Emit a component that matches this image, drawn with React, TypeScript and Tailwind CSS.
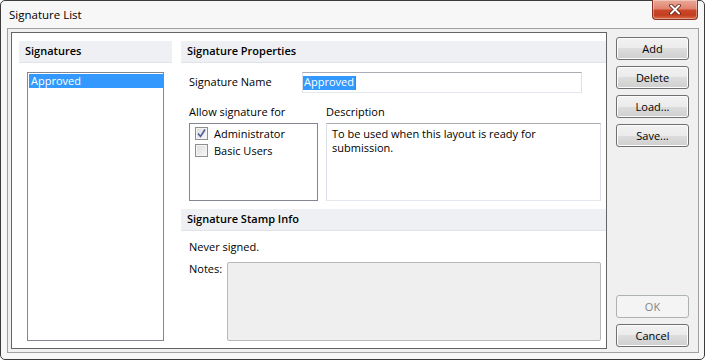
import React from "react";

const btnBase =
  "flex h-[23px] w-[73px] items-center justify-center rounded-[3px] border text-[11px] leading-none";

function Btn({ label, disabled }: { label: string; disabled?: boolean }) {
  return (
    <button
      disabled={disabled}
      className={
        disabled
          ? `${btnBase} border-[#adb2b5] bg-[#f4f4f4] text-[#838383]`
          : `${btnBase} border-[#707070] bg-[linear-gradient(#f2f2f2_0%,#ebebeb_50%,#dddddd_50%,#cfcfcf_100%)] text-black shadow-[inset_0_0_0_1px_#fcfcfc]`
      }
    >
      {label}
    </button>
  );
}

function Check({ checked, label }: { checked?: boolean; label: string }) {
  return (
    <div className="flex h-[17px] items-start">
      <div className="flex h-[13px] w-[13px] items-center justify-center border border-[#8e8f8f] bg-[linear-gradient(135deg,#dcdcdc,#f8f8f8)] shadow-[inset_0_0_0_1px_#f4f4f4]">
        {checked && (
          <svg width="9" height="9" viewBox="0 0 9 9">
            <path d="M1 4.5 L3.5 7.5 L8 0.5" fill="none" stroke="#4a5f97" strokeWidth="1.6" />
          </svg>
        )}
      </div>
      <span className="ml-[6px] text-[11px] leading-[13px]">{label}</span>
    </div>
  );
}

function Header({ title }: { title: string }) {
  return (
    <div className="flex h-[22px] items-center border-b border-[#e1e3e8] bg-[#eef0f3] pl-[6px] text-[11px] font-semibold">
      {title}
    </div>
  );
}

export default function App() {
  return (
    <div className="h-[360px] w-[705px] bg-white font-['Segoe_UI','Open_Sans','Noto_Sans',sans-serif] text-black">
      <div className="flex h-[360px] w-[705px] flex-col rounded-[5px] border border-[#3c3c3c] bg-[#f7f7f7]">
        {/* title bar */}
        <div className="flex h-[27px] items-start">
          <span className="pl-[8px] pt-[6px] text-[11.5px] leading-[16px]">Signature List</span>
          <div className="ml-auto mr-[6px] mt-[-1px] flex h-[20px] w-[46px] items-center justify-center rounded-b-[4px] border border-t-0 border-[#8a3325] bg-[linear-gradient(#eba898_0%,#e08470_45%,#c9462a_55%,#c2401f_80%,#d86a4c_100%)] shadow-[inset_0_0_0_1px_rgba(255,255,255,0.35)]">
            <svg width="12" height="11" viewBox="0 0 12 11">
              <path d="M2 1.5 L10 9.5 M10 1.5 L2 9.5" stroke="#5a1a10" strokeWidth="3.6" strokeLinecap="round" />
              <path d="M2 1.5 L10 9.5 M10 1.5 L2 9.5" stroke="#ffffff" strokeWidth="2" strokeLinecap="round" />
            </svg>
          </div>
        </div>

        {/* client area */}
        <div className="mb-[6px] ml-[6px] mr-[5px] flex flex-1 border border-[#a0a0a0] bg-[#f0f0f0] p-[3px]">
          {/* main panel */}
          <div className="flex w-[596px] border border-[#646464] bg-white pl-[7px] pt-[8px]">
            {/* signatures column */}
            <div className="flex w-[153px] flex-col">
              <Header title="Signatures" />
              <div className="ml-[8px] mt-[9px] h-[269px] w-[137px] border border-[#828790] bg-white">
                <div className="ml-[1px] mt-[1px] flex h-[14px] items-center bg-[#3399ff] pl-[2px] text-[11px] text-white">
                  Approved
                </div>
              </div>
            </div>

            {/* properties column */}
            <div className="ml-[9px] flex w-[425px] flex-col">
              <Header title="Signature Properties" />
              <div className="mt-[9px] flex h-[21px] items-center pl-[8px]">
                <span className="w-[113px] text-[11px]">Signature Name</span>
                <div className="flex h-[21px] w-[280px] items-center border border-[#dbdfe6] border-t-[#abadb3] border-b-[#e3e9ef] bg-white">
                  <span className="flex h-[14px] items-center bg-[#3399ff] pl-[1px] pr-[1px] text-[11px] text-white">
                    Approved
                  </span>
                  <span className="h-[14px] w-[1px] bg-[#cc6600]" />
                </div>
              </div>

              <div className="mt-[11px] flex h-[16px] items-center pl-[8px] text-[11px]">
                <span className="w-[137px]">Allow signature for</span>
                <span>Description</span>
              </div>

              <div className="mt-[3px] flex h-[78px] pl-[8px]">
                <div className="flex w-[129px] flex-col border border-[#828790] pl-[5px] pt-[3px]">
                  <Check checked label="Administrator" />
                  <Check label="Basic Users" />
                </div>
                <div className="ml-[8px] w-[275px] border border-[#dbdfe6] border-t-[#abadb3] border-b-[#e3e9ef] pl-[5px] pt-[3px] text-[11px] leading-[14px]">
                  To be used when this layout is ready for
                  <br />
                  submission.
                </div>
              </div>

              <div className="mt-[8px]">
                <Header title="Signature Stamp Info" />
              </div>
              <div className="mt-[9px] h-[14px] pl-[8px] text-[11px] leading-[14px]">Never signed.</div>
              <div className="mt-[8px] flex h-[79px] pl-[8px]">
                <span className="w-[38px] text-[11px] leading-[14px]">Notes:</span>
                <div className="w-[374px] rounded-[2px] border border-[#b8b8b8] bg-[#efefef]" />
              </div>
            </div>
          </div>

          {/* buttons */}
          <div className="mb-[2px] ml-[9px] mt-[5px] flex flex-col gap-[6px]">
            <Btn label="Add" />
            <Btn label="Delete" />
            <Btn label="Load..." />
            <Btn label="Save..." />
            <div className="flex-1" />
            <Btn label="OK" disabled />
            <Btn label="Cancel" />
          </div>
        </div>
      </div>
    </div>
  );
}
